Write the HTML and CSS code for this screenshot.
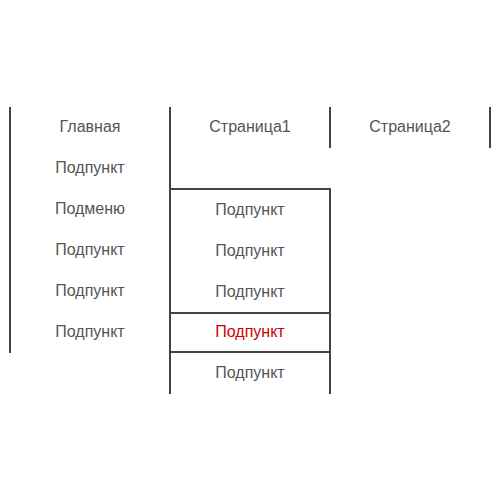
FILE: index.html
```html
<!DOCTYPE html>
<html lang="ru">

<head>
    <meta charset="UTF-8">
    <meta name="viewport" content="width=device-width, initial-scale=1.0">
    <title>Меню</title>
    <link rel="stylesheet" href="styles.css">
</head>

<body>
    <div class="menu">
        <div class="col">
            <div class="item">Главная</div>
            <div class="item">Подпункт</div>
            <div class="item">Подменю</div>
            <div class="item">Подпункт</div>
            <div class="item">Подпункт</div>
            <div class="item">Подпункт</div>
        </div>
        <div class="col">
            <div class="item">Страница1</div>
            <div class="spacer"></div>
            <div class="sub">
                <div class="item">Подпункт</div>
                <div class="item">Подпункт</div>
                <div class="item">Подпункт</div>
                <div class="item active">Подпункт</div>
                <div class="item">Подпункт</div>
            </div>
        </div>
        <div class="col last">
            <div class="item">Страница2</div>
        </div>
    </div>
</body>

</html>
```

FILE: styles.css
```css
body {
    margin: 8px;
    font-family: "Liberation Sans", Arial, sans-serif;
    font-size: 16px;
    color: #555;
    background: #fff;
}

.menu {
    display: flex;
    align-items: flex-start;
    padding-top: 99px;
    padding-left: 1px;
}

.col {
    box-sizing: border-box;
    width: 160px;
    border-left: 2px solid #444;
}

.col.last {
    width: 162px;
    border-right: 2px solid #444;
}

.item {
    box-sizing: border-box;
    height: 41px;
    line-height: 39px;
    padding-bottom: 2px;
    text-align: center;
    white-space: nowrap;
}

.spacer {
    height: 40px;
}

.sub {
    margin-right: -2px;
    border-top: 2px solid #444;
    border-right: 2px solid #444;
}

.sub .active {
    margin-top: -1px;
    border-top: 2px solid #444;
    border-bottom: 2px solid #444;
    line-height: 35px;
    padding-bottom: 2px;
    color: #cc0000;
}
```
